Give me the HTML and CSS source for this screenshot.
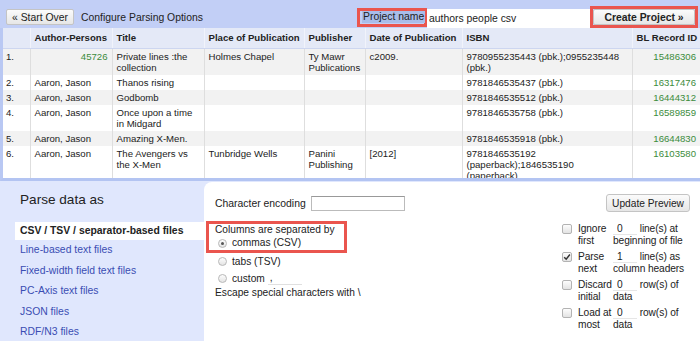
FILE: index.html
```html
<!DOCTYPE html>
<html>
<head>
    <meta charset="UTF-8">
    <link rel="stylesheet" href="styles.css">
</head>
<body>
    <div class="header">
        <button class="btn start-over">« Start Over</button>
        <span class="title">Configure Parsing Options</span>
        <div class="project">
            <label class="red-box project-label" for="projectName"><span>Project name</span></label>
            <input type="text" id="projectName" class="project-input" value="authors people csv">
            <div class="red-box create-box">
                <button class="btn create">Create Project »</button>
            </div>
        </div>
    </div>

    <div class="preview">
        <table class="data">
            <colgroup>
                <col style="width:27px">
                <col style="width:82px">
                <col style="width:92px">
                <col style="width:100px">
                <col style="width:61px">
                <col style="width:97px">
                <col style="width:170px">
                <col style="width:68px">
            </colgroup>
            <thead>
                <tr>
                    <th></th>
                    <th>Author-Persons</th>
                    <th>Title</th>
                    <th>Place of Publication</th>
                    <th>Publisher</th>
                    <th>Date of Publication</th>
                    <th>ISBN</th>
                    <th>BL Record ID</th>
                </tr>
            </thead>
            <tbody>
                <tr>
                    <td>1.</td>
                    <td class="num">45726</td>
                    <td>Private lines :the collection</td>
                    <td>Holmes Chapel</td>
                    <td>Ty Mawr Publications</td>
                    <td>c2009.</td>
                    <td>9780955235443 (pbk.);0955235448 (pbk.)</td>
                    <td class="num">15486306</td>
                </tr>
                <tr>
                    <td>2.</td>
                    <td>Aaron, Jason</td>
                    <td>Thanos rising</td>
                    <td></td>
                    <td></td>
                    <td></td>
                    <td>9781846535437 (pbk.)</td>
                    <td class="num">16317476</td>
                </tr>
                <tr>
                    <td>3.</td>
                    <td>Aaron, Jason</td>
                    <td>Godbomb</td>
                    <td></td>
                    <td></td>
                    <td></td>
                    <td>9781846535512 (pbk.)</td>
                    <td class="num">16444312</td>
                </tr>
                <tr>
                    <td>4.</td>
                    <td>Aaron, Jason</td>
                    <td>Once upon a time in Midgard</td>
                    <td></td>
                    <td></td>
                    <td></td>
                    <td>9781846535758 (pbk.)</td>
                    <td class="num">16589859</td>
                </tr>
                <tr>
                    <td>5.</td>
                    <td>Aaron, Jason</td>
                    <td>Amazing X-Men.</td>
                    <td></td>
                    <td></td>
                    <td></td>
                    <td>9781846535918 (pbk.)</td>
                    <td class="num">16644830</td>
                </tr>
                <tr>
                    <td>6.</td>
                    <td>Aaron, Jason</td>
                    <td>The Avengers vs the X-Men</td>
                    <td>Tunbridge Wells</td>
                    <td>Panini Publishing</td>
                    <td>[2012]</td>
                    <td>9781846535192 (paperback);1846535190 (paperback)</td>
                    <td class="num">16103580</td>
                </tr>
            </tbody>
        </table>
    </div>

    <div class="options">
        <div class="formats">
            <h2>Parse data as</h2>
            <ul class="format-list">
                <li class="selected">CSV / TSV / separator-based files</li>
                <li><a href="#">Line-based text files</a></li>
                <li><a href="#">Fixed-width field text files</a></li>
                <li><a href="#">PC-Axis text files</a></li>
                <li><a href="#">JSON files</a></li>
                <li><a href="#">RDF/N3 files</a></li>
            </ul>
        </div>

        <div class="controls">
            <div class="top-row">
                <div class="encoding">
                    <label for="encoding">Character encoding</label>
                    <input type="text" id="encoding" class="encoding-input">
                </div>
                <button class="btn update">Update Preview</button>
            </div>

            <div class="parse-opts">
                <div class="separators">
                    <div class="red-box sep-box">
                        <div>Columns are separated by</div>
                        <div class="radio-row"><span class="radio checked"></span>commas (CSV)</div>
                    </div>
                    <div class="radio-row outside"><span class="radio"></span>tabs (TSV)</div>
                    <div class="radio-row outside"><span class="radio"></span>custom <input type="text" class="custom-input" value=","></div>
                    <div class="escape">Escape special characters with \</div>
                </div>

                <table class="line-opts">
                    <colgroup>
                        <col style="width:18px">
                        <col style="width:35px">
                        <col style="width:77px">
                    </colgroup>
                    <tr>
                        <td><span class="cb"></span></td>
                        <td>Ignore first</td>
                        <td><input type="text" class="small-input" value="0"> line(s) at beginning of file</td>
                    </tr>
                    <tr>
                        <td><span class="cb"><svg viewBox="0 0 10 10" width="8" height="8"><path d="M1.5 5.2 L4 7.8 L8.6 1.8" fill="none" stroke="#333" stroke-width="1.8"/></svg></span></td>
                        <td>Parse next</td>
                        <td><input type="text" class="small-input" value="1"> line(s) as column headers</td>
                    </tr>
                    <tr>
                        <td><span class="cb"></span></td>
                        <td>Discard initial</td>
                        <td><input type="text" class="small-input" value="0"> row(s) of data</td>
                    </tr>
                    <tr>
                        <td><span class="cb"></span></td>
                        <td>Load at most</td>
                        <td><input type="text" class="small-input" value="0"> row(s) of data</td>
                    </tr>
                </table>
            </div>
        </div>
    </div>
</body>
</html>
```

FILE: styles.css
```css
body {
    width: 700px;
    height: 341px;
    margin: 0;
    overflow: hidden;
    font-family: "Liberation Sans", Arial, Helvetica, sans-serif;
    font-size: 10.4px;
    color: #222;
    background: #e0e7fd;
}

.btn {
    font-family: inherit;
    font-size: 10.4px;
    color: #222;
    height: 16px;
    padding: 0 5px;
    border: 1px solid #c4c4c4;
    border-radius: 2px;
    background: linear-gradient(#fbfbfb, #e6e6e6);
    cursor: pointer;
}

.red-box {
    border: 3px solid #ea554e;
    box-sizing: border-box;
}

/* top bar */
.header {
    display: flex;
    align-items: center;
    height: 28px;
    padding: 6px 2px 0 6px;
    box-sizing: border-box;
    background: #c2cff6;
}

.title {
    margin-left: 7px;
}

.project {
    display: flex;
    align-items: center;
    margin-left: auto;
}

.project-label {
    display: flex;
    align-items: center;
    width: 70px;
    height: 19px;
    padding: 0 2px;
    white-space: nowrap;
}

.project-label span {
    background: #a9bdea;
    line-height: 12px;
    padding: 0 1px;
}

.project-input {
    width: 163px;
    height: 19px;
    margin-top: 2px;
    padding: 0 2px;
    border: none;
    box-sizing: border-box;
    font-family: inherit;
    font-size: 10.4px;
    color: #222;
    background: #fff;
}

.create-box {
    display: flex;
    width: 108px;
    height: 22px;
}

.btn.create {
    width: 100%;
    font-weight: bold;
}

/* data preview */
.preview {
    height: 153px;
    border-left: 3px solid #b9c8f3;
    border-bottom: 3px solid #b3c4f2;
    box-sizing: border-box;
    overflow: hidden;
    background: #fff;
}

.data {
    width: 697px;
    border-collapse: collapse;
    table-layout: fixed;
    font-size: 9.6px;
}

.data th {
    height: 20px;
    padding: 0 4px;
    text-align: left;
    background: #e4e9f7;
    border-left: 1px solid #f1f3fb;
    border-bottom: 1px solid #cdd6f0;
    white-space: nowrap;
    overflow: hidden;
    box-sizing: border-box;
}

.data td {
    padding: 2px 4px 2px;
    line-height: 11px;
    vertical-align: top;
    border-left: 1px solid #dedede;
    overflow: hidden;
}

.data th:first-child,
.data td:first-child {
    border-left: none;
    padding-left: 3px;
}

.data tbody tr:nth-child(odd) {
    background: #f2f2f2;
}

.data td.num {
    text-align: right;
    color: #3c8c3c;
}

/* lower panel */
.options {
    display: grid;
    grid-template-columns: 204px 1fr;
    height: 160px;
}

.formats {
    padding: 11px 0 0 15px;
}

.formats h2 {
    margin: 0 0 14px 5px;
    font-size: 13.6px;
    line-height: 16px;
    font-weight: normal;
    color: #222;
}

.format-list {
    list-style: none;
    margin: 0;
    padding: 0;
}

.format-list li {
    padding: 4px 5px;
    line-height: 12.6px;
}

.format-list li.selected {
    padding: 3px 5px;
    line-height: 12px;
    font-weight: bold;
    background: #fff;
}

.format-list a {
    color: #3a4db3;
    text-decoration: none;
}

.controls {
    margin-top: 1px;
    padding: 12px 10px 0 11px;
    background: #fff;
    border-top-left-radius: 8px;
}

.top-row {
    display: flex;
    align-items: center;
    justify-content: space-between;
    height: 18px;
}

.encoding {
    display: flex;
    align-items: center;
    gap: 5px;
}

.encoding-input {
    width: 94px;
    height: 15px;
    padding: 0 2px;
    border: 1px solid #bbb;
    border-top-color: #999;
    box-sizing: border-box;
    font-family: inherit;
    font-size: 10.2px;
}

.btn.update {
    width: 84px;
    height: 18px;
    font-size: 10.2px;
    border-radius: 3px;
}

.parse-opts {
    display: flex;
    justify-content: space-between;
    margin-top: 9px;
    font-size: 10.2px;
}

.separators {
    margin-left: -9px;
}

.sep-box {
    padding: 0 7px 0 6px;
    width: 141px;
    line-height: 12.5px;
}

.radio-row {
    display: flex;
    align-items: center;
    height: 13px;
}

.radio-row.outside {
    height: 17px;
    padding-left: 9px;
}

.radio {
    display: inline-block;
    width: 9px;
    height: 9px;
    margin: 0 5px 0 3px;
    border: 1px solid #b8b8b8;
    border-radius: 50%;
    box-sizing: border-box;
    background: linear-gradient(#fdfdfd, #e4e4e4);
    position: relative;
}

.radio.checked::after {
    content: "";
    position: absolute;
    left: 2px;
    top: 2px;
    width: 3px;
    height: 3px;
    border-radius: 50%;
    background: #555;
}

.custom-input {
    width: 34px;
    height: 14px;
    margin-left: 3px;
    padding: 0 2px;
    border: none;
    border-bottom: 1px solid #e0e0e0;
    box-sizing: border-box;
    font-family: inherit;
    font-size: 10.2px;
    color: #222;
}

.escape {
    padding-left: 9px;
    line-height: 12.5px;
}

.line-opts {
    width: 130px;
    border-collapse: collapse;
    table-layout: fixed;
    letter-spacing: -0.1px;
}

.line-opts td {
    padding: 2px 0;
    line-height: 12px;
    vertical-align: top;
}

.cb {
    display: flex;
    align-items: center;
    justify-content: center;
    width: 10px;
    height: 10px;
    margin: 1px 0 0 2px;
    border: 1px solid #b3b3b3;
    border-radius: 2px;
    box-sizing: border-box;
    background: linear-gradient(#fdfdfd, #e3e3e3);
}

.small-input {
    width: 24px;
    height: 12px;
    padding: 0 0 0 4px;
    border: none;
    border-bottom: 1px solid #e6e6e6;
    box-sizing: border-box;
    vertical-align: top;
    font-family: inherit;
    font-size: 10.2px;
    color: #222;
}
```
